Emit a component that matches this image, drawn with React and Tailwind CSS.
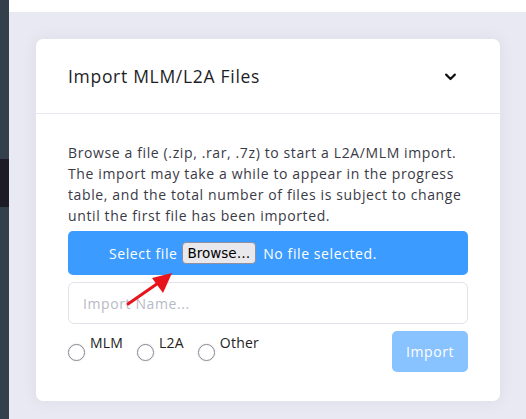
import React from "react";

function ChevronDown() {
  return (
    <svg width="15" height="15" viewBox="0 0 24 24" fill="none" stroke="#111" strokeWidth="3.4" strokeLinecap="round" strokeLinejoin="round">
      <path d="M5 9l7 7 7-7" />
    </svg>
  );
}

function Radio({ label }) {
  return (
    <label className="flex items-start gap-[5px]">
      <span className="mt-[9px] w-[17px] h-[17px] rounded-full border-[1.5px] border-[#8a8a96] bg-white shadow-[0_0_2px_rgba(0,0,0,0.15)]" />
      <span className="text-[14px] leading-[16px] text-[#222] tracking-[0.2px]">{label}</span>
    </label>
  );
}

export default function App() {
  return (
    <div className="flex min-h-[419px] w-[526px] font-['Open_Sans',sans-serif]">
      {/* sidebar strip */}
      <div className="w-[9px] flex flex-col bg-[#343f4c]">
        <div className="h-[159px]" />
        <div className="h-[48px] bg-[#1c1b26]" />
      </div>

      <div className="flex-1 flex flex-col bg-[#e8e9f2]">
        <div className="h-[12px] bg-white" />

        <div className="pl-[27px] pr-[26px] pt-[27px]">
          <div className="relative bg-white rounded-[7px] shadow-[0_0_14px_rgba(120,125,160,0.12)]">
            {/* header */}
            <div className="h-[75px] flex items-center justify-between pl-[32px] pr-[42px] border-b border-[#e9eaf1]">
              <h2 className="text-[17.5px] font-medium text-[#1d1d26] tracking-[0.7px]">Import MLM/L2A Files</h2>
              <ChevronDown />
            </div>

            {/* body */}
            <div className="px-[32px] pt-[28px] pb-[29px]">
              <p className="w-[394px] text-[14px] leading-[21px] text-[#3a3a46] tracking-[0.62px]">
                Browse a file (.zip, .rar, .7z) to start a L2A/MLM import. The import may take a while to appear in the progress table, and the total number of files is subject to change until the first file has been imported.
              </p>

              <div className="mt-[5px] h-[44px] rounded-[5px] bg-[#3b9bff] flex items-center pl-[41px] text-white text-[14px] tracking-[0.6px]">
                <span>Select file</span>
                <span className="ml-[4px] h-[22px] px-[5px] flex items-center rounded-[4px] border border-[#8f8f9d] bg-[#e9e9ed] text-black font-['DejaVu_Sans',sans-serif] text-[13.5px] tracking-normal">
                  Browse…
                </span>
                <span className="ml-[7px]">No file selected.</span>
              </div>

              <input
                className="mt-[7px] w-full h-[42px] rounded-[6px] border border-[#e2e3ea] px-[14px] text-[14px] tracking-[0.6px] placeholder:text-[#b8bac6] outline-none"
                placeholder="Import Name..."
              />

              <div className="mt-[7px] flex items-start justify-between">
                <div className="flex gap-[14px] pt-[4px]">
                  <Radio label="MLM" />
                  <Radio label="L2A" />
                  <Radio label="Other" />
                </div>
                <button className="w-[76px] h-[41px] rounded-[5px] bg-[#88c2ff] text-white text-[14px] tracking-[0.6px]">Import</button>
              </div>
            </div>

            {/* red annotation arrow */}
            <svg className="absolute left-[86px] top-[228px]" width="60" height="46" viewBox="0 0 60 46">
              <line x1="6" y1="37" x2="42" y2="12" stroke="#e8141b" strokeWidth="3" strokeLinecap="round" />
              <polygon points="50,6 30,11 41,26" fill="#e8141b" />
            </svg>
          </div>
        </div>
      </div>
    </div>
  );
}
